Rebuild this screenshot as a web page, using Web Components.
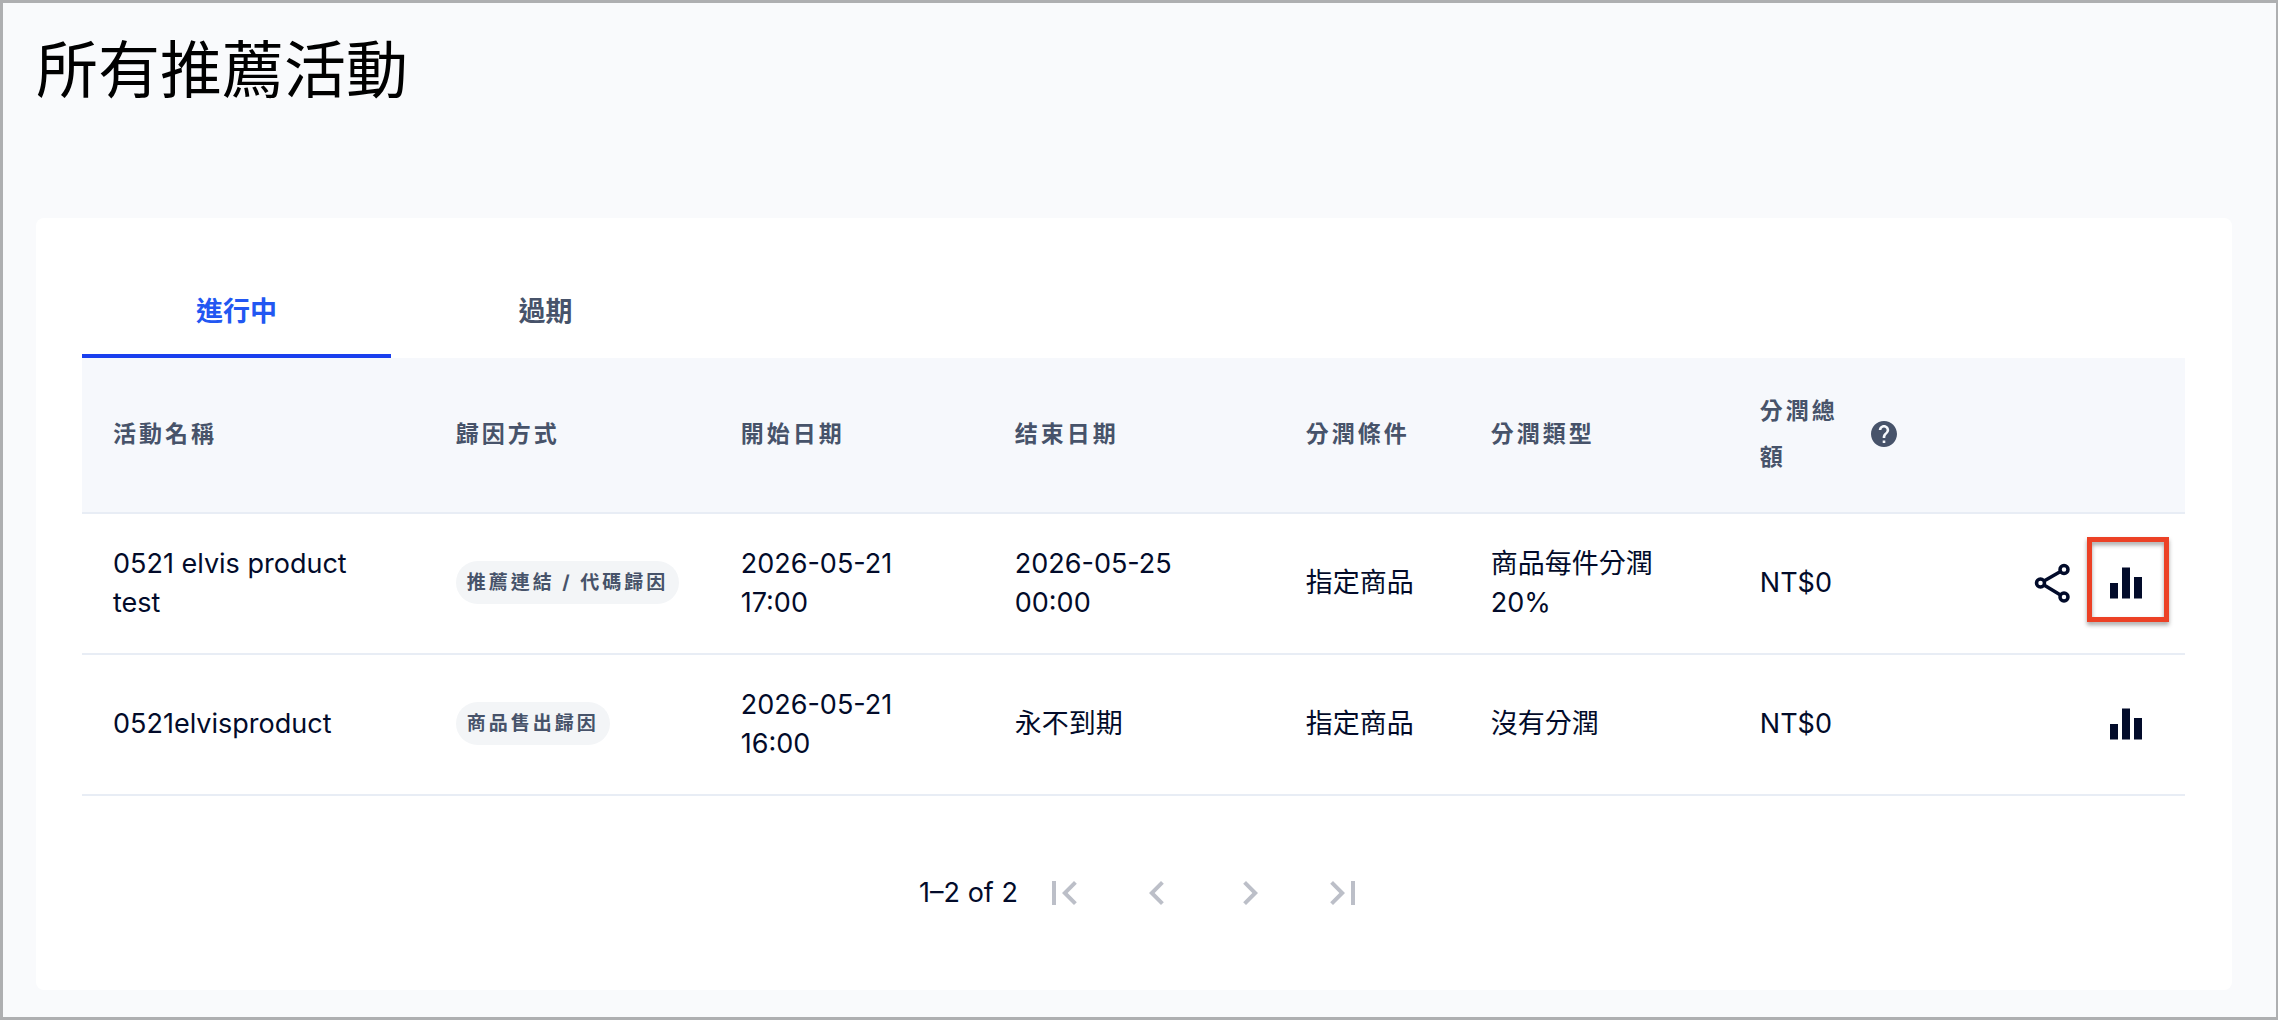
<!DOCTYPE html>
<html lang="zh-Hant">
<head>
<meta charset="utf-8">
<meta name="viewport" content="width=device-width, initial-scale=1">
<title>所有推薦活動</title>
<style>
  body {
    margin: 0;
    font-family: Inter, 'Noto Sans CJK TC', sans-serif;
  }
</style>
</head>
<body>

<campaign-page>
  <span slot="title">所有推薦活動</span>
  <tab-list>
    <tab-item selected>進行中</tab-item>
    <tab-item>過期</tab-item>
  </tab-list>
  <campaign-table></campaign-table>
  <table-pager>1–2 of 2</table-pager>
</campaign-page>

<script>
const ICONS = {
  share: `<svg viewBox="0 0 48 48" fill="none" stroke="currentColor" stroke-width="3.500">
    <circle cx="12.5" cy="24" r="4"/><circle cx="36" cy="10.5" r="4"/><circle cx="36" cy="38" r="4"/>
    <path d="M16 22 32.500 12.500M16 26l16.500 10"/></svg>`,
  chart: `<svg viewBox="0 0 48 48" fill="currentColor">
    <path d="M8 24h8v15.500H8zM20 8.500h8v31h-8zM32 18h8v21.500h-8z"/></svg>`,
  help: `<svg viewBox="2 2 20 20" fill="currentColor">
    <path d="M12 2C6.480 2 2 6.480 2 12s4.480 10 10 10 10-4.480 10-10S17.520 2 12 2zm1 17h-2v-2h2v2zm2.070-7.750-.9.920C13.450 12.900 13 13.500 13 15h-2v-.5c0-1.100.450-2.100 1.170-2.830l1.240-1.260c.370-.360.590-.860.590-1.410 0-1.100-.9-2-2-2s-2 .9-2 2H8c0-2.210 1.790-4 4-4s4 1.790 4 4c0 .880-.360 1.680-.930 2.250z"/></svg>`,
  first: `<svg viewBox="0 0 24 24" fill="currentColor"><path d="M18.410 16.590 13.820 12l4.590-4.590L17 6l-6 6 6 6zM6 6h2v12H6z"/></svg>`,
  prev: `<svg viewBox="0 0 24 24" fill="currentColor"><path d="M15.410 7.410 14 6l-6 6 6 6 1.410-1.410L10.830 12z"/></svg>`,
  next: `<svg viewBox="0 0 24 24" fill="currentColor"><path d="M10 6 8.590 7.410 13.170 12l-4.580 4.590L10 18l6-6z"/></svg>`,
  last: `<svg viewBox="0 0 24 24" fill="currentColor"><path d="M5.590 7.410 10.180 12l-4.590 4.590L7 18l6-6-6-6zM16 6h2v12h-2z"/></svg>`
};

const makeTemplate = (html) => {
  const template = document.createElement('template');
  template.innerHTML = html;
  return template;
};

class BaseElement extends HTMLElement {
  constructor() {
    super();
    this.attachShadow({ mode: 'open' });
    this.shadowRoot.appendChild(this.constructor.template.content.cloneNode(true));
  }
}

class CampaignPage extends BaseElement {
  static template = makeTemplate(`
    <style>
      :host {
        display: block;
        box-sizing: border-box;
        min-height: 100vh;
        padding: 22px 44px 27px 33px;
        border: 3px solid #aeafb1;
        border-right-width: 2px;
        background: #f9fafc;
        color: #020b2a;
      }
      h1 {
        margin: 0 0 101px;
        color: #000;
        font-size: 62px;
        line-height: 92px;
        font-weight: 400;
      }
      main {
        padding: 46px 47px 46px 46px;
        border-radius: 8px;
        background: #fff;
      }
    </style>
    <h1><slot name="title"></slot></h1>
    <main><slot></slot></main>
  `);
}

class TabList extends BaseElement {
  static template = makeTemplate(`
    <style>
      :host { display: flex; }
    </style>
    <slot></slot>
  `);

  connectedCallback() {
    this.setAttribute('role', 'tablist');
    this.addEventListener('click', (event) => {
      const tab = event.target.closest('tab-item');
      if (!tab) return;
      this.querySelectorAll('tab-item').forEach((item) => {
        item.toggleAttribute('selected', item === tab);
      });
    });
  }
}

class TabItem extends BaseElement {
  static observedAttributes = ['selected'];
  static template = makeTemplate(`
    <style>
      :host { display: block; width: 309px; }
      button {
        width: 100%;
        height: 94px;
        padding: 0;
        border: 0;
        border-block: 4px solid transparent;
        background: none;
        color: #47536a;
        font: 700 27px/39px Inter, 'Noto Sans CJK TC', sans-serif;
        cursor: pointer;
      }
      :host([selected]) button {
        color: #2257f2;
        border-bottom-color: #1a3fee;
      }
    </style>
    <button type="button" role="tab"><slot></slot></button>
  `);

  attributeChangedCallback() {
    this.shadowRoot.querySelector('button')
      .setAttribute('aria-selected', this.hasAttribute('selected'));
  }
}

class StatusBadge extends BaseElement {
  static template = makeTemplate(`
    <style>
      :host {
        display: inline-block;
        padding: 0 11px;
        border-radius: 22px;
        background: #f3f5f7;
        color: #47536a;
        font-size: 19px;
        line-height: 43px;
        font-weight: 700;
        letter-spacing: 3px;
        white-space: nowrap;
        vertical-align: middle;
      }
    </style>
    <slot></slot>
  `);
}

class IconButton extends BaseElement {
  static template = makeTemplate(`
    <style>
      :host { display: inline-block; position: relative; }
      button {
        display: grid;
        place-items: center;
        width: var(--button-size, 56px);
        height: var(--button-size, 56px);
        padding: 0;
        border: 0;
        background: none;
        color: inherit;
        cursor: pointer;
      }
      button:disabled { cursor: default; }
      svg { display: block; width: 48px; height: 48px; }
      .mark { display: none; }
      :host([marked]) .mark {
        display: block;
        position: absolute;
        inset: -18px -15px -11px -11px;
        border: 5px solid #ec4125;
        filter: drop-shadow(0 3px 2px rgba(0, 0, 0, 0.35));
        pointer-events: none;
      }
    </style>
    <button type="button"></button>
    <span class="mark"></span>
  `);

  connectedCallback() {
    const button = this.shadowRoot.querySelector('button');
    button.innerHTML = ICONS[this.getAttribute('icon')];
    button.setAttribute('aria-label', this.getAttribute('label'));
    button.disabled = this.hasAttribute('disabled');
  }
}

class CampaignTable extends BaseElement {
  static template = makeTemplate(`
    <style>
      :host { display: block; }
      table {
        width: 100%;
        table-layout: fixed;
        border-collapse: separate;
        border-spacing: 0;
        text-align: left;
      }
      th, td {
        box-sizing: border-box;
        border-bottom: 2px solid #e8edf5;
        vertical-align: middle;
      }
      th {
        height: 156px;
        padding: 30px 31px 32px;
        background: #f6f8fc;
        color: #47536a;
        font-size: 23px;
        line-height: 46px;
        font-weight: 700;
        letter-spacing: 3px;
      }
      td {
        height: 141px;
        padding: 29px 31px 31px;
        font-size: 27px;
        line-height: 39px;
      }
      .with-help { display: flex; align-items: center; gap: 18px; }
      .with-help svg { flex: none; width: 26px; height: 26px; }
      .actions { display: flex; justify-content: flex-end; gap: 18px; }
      .name { width: 16.300%; }
      .source { width: 13.550%; }
      .start { width: 13.030%; }
      .end { width: 13.840%; }
      .rule { width: 8.800%; }
      .type { width: 12.790%; }
      .total { width: 9.460%; }
    </style>
    <table>
      <colgroup>
        <col class="name"><col class="source"><col class="start"><col class="end">
        <col class="rule"><col class="type"><col class="total"><col>
      </colgroup>
      <thead>
        <tr>
          <th scope="col">活動名稱</th>
          <th scope="col">歸因方式</th>
          <th scope="col">開始日期</th>
          <th scope="col">结束日期</th>
          <th scope="col">分潤條件</th>
          <th scope="col">分潤類型</th>
          <th scope="col"><div class="with-help"><span>分潤總額</span>${ICONS.help}</div></th>
          <th></th>
        </tr>
      </thead>
      <tbody>
        <tr>
          <td>0521 elvis product test</td>
          <td><status-badge>推薦連結 / 代碼歸因</status-badge></td>
          <td>2026-05-21 17:00</td>
          <td>2026-05-25 00:00</td>
          <td>指定商品</td>
          <td>商品每件分潤 20%</td>
          <td>NT$0</td>
          <td><div class="actions">
            <icon-button icon="share" label="分享"></icon-button>
            <icon-button icon="chart" label="報表" marked></icon-button>
          </div></td>
        </tr>
        <tr>
          <td>0521elvisproduct</td>
          <td><status-badge>商品售出歸因</status-badge></td>
          <td>2026-05-21 16:00</td>
          <td>永不到期</td>
          <td>指定商品</td>
          <td>沒有分潤</td>
          <td>NT$0</td>
          <td><div class="actions">
            <icon-button icon="chart" label="報表"></icon-button>
          </div></td>
        </tr>
      </tbody>
    </table>
  `);
}

class TablePager extends BaseElement {
  static template = makeTemplate(`
    <style>
      :host {
        display: flex;
        justify-content: center;
        align-items: center;
        padding: 50px 0 5px 42px;
        font-size: 27px;
        line-height: 39px;
      }
      icon-button {
        --button-size: 93px;
        color: #bcbfc8;
      }
    </style>
    <slot></slot>
    <icon-button icon="first" label="第一頁" disabled></icon-button>
    <icon-button icon="prev" label="上一頁" disabled></icon-button>
    <icon-button icon="next" label="下一頁" disabled></icon-button>
    <icon-button icon="last" label="最後一頁" disabled></icon-button>
  `);
}

customElements.define('icon-button', IconButton);
customElements.define('status-badge', StatusBadge);
customElements.define('tab-item', TabItem);
customElements.define('tab-list', TabList);
customElements.define('campaign-table', CampaignTable);
customElements.define('table-pager', TablePager);
customElements.define('campaign-page', CampaignPage);
</script>
</body>
</html>
